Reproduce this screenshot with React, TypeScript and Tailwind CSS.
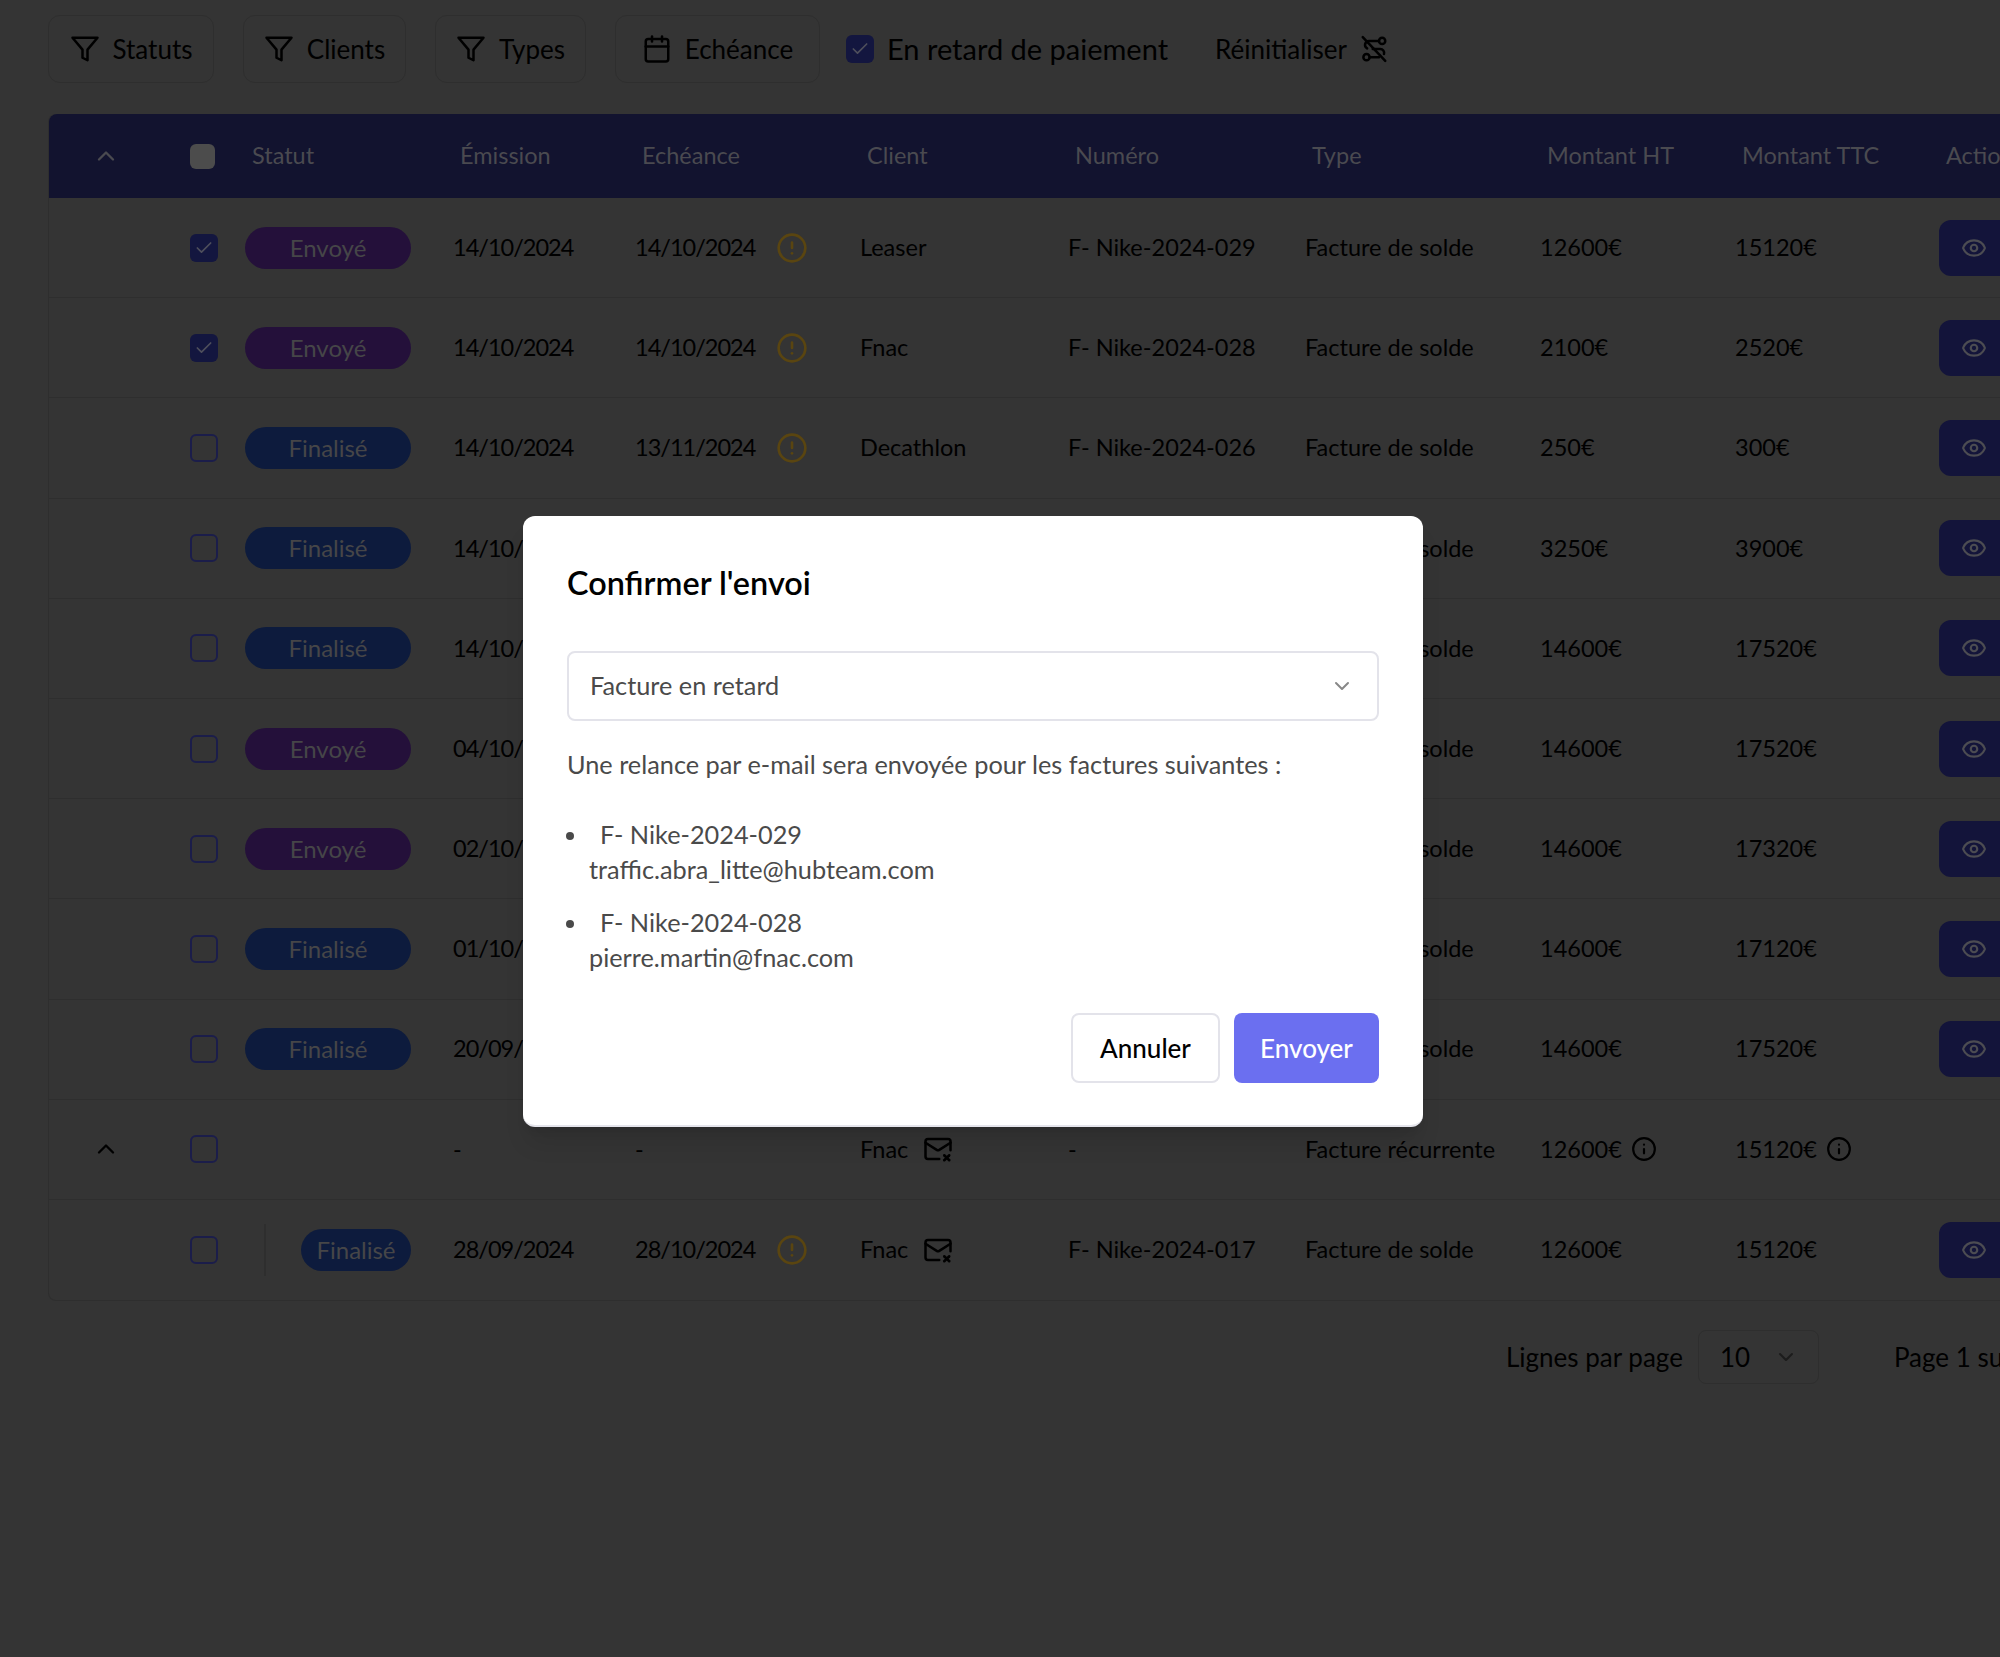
import { Calendar, Check, ChevronDown, ChevronUp, CircleAlert, Eye, Info, MailX } from 'lucide-react'

const COLS =
  'grid grid-cols-[141px_55px_208px_182px_225px_208px_237px_235px_195px_204px_120px] items-center'

type Row = {
  status: 'Envoyé' | 'Finalisé'
  checked?: boolean
  emission: string
  due: string
  client: string
  num: string
  ht: string
  ttc: string
}

const rows: Row[] = [
  { status: 'Envoyé', checked: true, emission: '14/10/2024', due: '14/10/2024', client: 'Leaser', num: 'F- Nike-2024-029', ht: '12600€', ttc: '15120€' },
  { status: 'Envoyé', checked: true, emission: '14/10/2024', due: '14/10/2024', client: 'Fnac', num: 'F- Nike-2024-028', ht: '2100€', ttc: '2520€' },
  { status: 'Finalisé', emission: '14/10/2024', due: '13/11/2024', client: 'Decathlon', num: 'F- Nike-2024-026', ht: '250€', ttc: '300€' },
  { status: 'Finalisé', emission: '14/10/2024', due: '13/11/2024', client: 'Decathlon', num: 'F- Nike-2024-025', ht: '3250€', ttc: '3900€' },
  { status: 'Finalisé', emission: '14/10/2024', due: '13/11/2024', client: 'Fnac', num: 'F- Nike-2024-024', ht: '14600€', ttc: '17520€' },
  { status: 'Envoyé', emission: '04/10/2024', due: '03/11/2024', client: 'Fnac', num: 'F- Nike-2024-023', ht: '14600€', ttc: '17520€' },
  { status: 'Envoyé', emission: '02/10/2024', due: '01/11/2024', client: 'Fnac', num: 'F- Nike-2024-022', ht: '14600€', ttc: '17320€' },
  { status: 'Finalisé', emission: '01/10/2024', due: '31/10/2024', client: 'Fnac', num: 'F- Nike-2024-021', ht: '14600€', ttc: '17120€' },
  { status: 'Finalisé', emission: '20/09/2024', due: '20/10/2024', client: 'Fnac', num: 'F- Nike-2024-020', ht: '14600€', ttc: '17520€' },
]

const FilterIcon = () => (
  <svg width="30" height="30" viewBox="0 0 24 24" fill="none" stroke="currentColor" strokeWidth="2" strokeLinecap="round" strokeLinejoin="round">
    <polygon points="22 3 2 3 10 12.46 10 19 14 21 14 12.46 22 3" />
  </svg>
)

const ResetIcon = () => (
  <svg width="30" height="30" viewBox="0 0 24 24" fill="none" stroke="currentColor" strokeWidth="2" strokeLinecap="round" strokeLinejoin="round">
    <path d="M3 2.5l18 19" />
    <circle cx="18.5" cy="5.5" r="2.5" />
    <circle cx="6" cy="18.5" r="2.5" />
    <path d="M8.5 18.5H16M16 5.5H8a3.2 3.2 0 0 0-1.5 6" />
    <path d="M11 12h6a3.2 3.2 0 0 1 3 4" />
  </svg>
)

const Box = ({ checked }: { checked?: boolean }) =>
  checked ? (
    <span className="flex h-7 w-7 items-center justify-center rounded-md bg-[#13163f] text-[#4e4f5c]">
      <Check size={20} strokeWidth={2} />
    </span>
  ) : (
    <span className="block h-7 w-7 rounded-md border-2 border-[#1b1d4a]" />
  )

const Pill = ({ status, small }: { status: string; small?: boolean }) => (
  <span
    className={`flex h-[42px] items-center justify-center rounded-full text-[24px] text-[#464648] ${
      status === 'Envoyé' ? 'bg-[#24103a]' : 'bg-[#0d1b3d]'
    } ${small ? 'ml-auto w-[110px]' : 'w-[166px]'}`}
  >
    {status}
  </span>
)

const ActionButton = () => (
  <span className="flex h-14 w-[80px] items-center rounded-l-xl bg-[#13143a] pl-[22px] text-[#4c4c52]">
    <Eye size={26} strokeWidth={2} />
  </span>
)

const Warn = () => <CircleAlert size={32} strokeWidth={2} className="ml-[21px] text-[#5a4510]" />

const Toolbutton = ({ label, width, icon }: { label: string; width: string; icon: React.ReactNode }) => (
  <button className={`flex h-[68px] items-center justify-center gap-[13px] rounded-xl border border-[#2e2e2e] text-[26px] ${width}`}>
    {icon}
    {label}
  </button>
)

export default function App() {
  return (
    <div className="relative h-[1657px] w-[2000px] overflow-hidden bg-[#343434] font-['Lato',sans-serif] text-[23.5px] text-black">
      {/* filtres */}
      <div className="flex items-center gap-[29px] pl-[48px] pt-[15px]">
        <Toolbutton label="Statuts" width="w-[166px]" icon={<FilterIcon />} />
        <Toolbutton label="Clients" width="w-[163px]" icon={<FilterIcon />} />
        <Toolbutton label="Types" width="w-[151px]" icon={<FilterIcon />} />
        <Toolbutton label="Echéance" width="w-[205px]" icon={<Calendar size={30} strokeWidth={2} />} />
        <div className="ml-[-3px] flex items-center gap-[13px] text-[29px]">
          <span className="flex h-7 w-7 items-center justify-center rounded-md bg-[#13163f] text-[#4e4f5c]">
            <Check size={20} strokeWidth={2} />
          </span>
          En retard de paiement
        </div>
        <div className="ml-[18px] flex items-center gap-[12px] text-[26px]">
          Réinitialiser
          <ResetIcon />
        </div>
      </div>

      {/* tableau */}
      <div className="ml-[48px] mt-[31px] w-[2100px] rounded-t-lg rounded-bl-lg border-b border-l border-[#2e2e2e]">
        <div className={`${COLS} h-[84px] rounded-t-lg bg-[#12132f] text-[23.5px] text-[#4a4a50]`}>
          <ChevronUp size={28} strokeWidth={2} className="ml-[43px]" />
          <span className="block h-[25px] w-[25px] rounded-md bg-[#4c4c4c]" />
          <span className="pl-[7px]">Statut</span>
          <span className="pl-[7px]">Émission</span>
          <span className="pl-[7px]">Echéance</span>
          <span className="pl-[7px]">Client</span>
          <span className="pl-[7px]">Numéro</span>
          <span className="pl-[7px]">Type</span>
          <span className="pl-[7px]">Montant HT</span>
          <span className="pl-[7px]">Montant TTC</span>
          <span className="pl-[7px]">Actions</span>
        </div>

        {rows.map((r) => (
          <div key={r.num} className={`${COLS} h-[100.2px] border-b border-[#2e2e2e]`}>
            <span />
            <Box checked={r.checked} />
            <Pill status={r.status} />
            <span className="tracking-[-1px]">{r.emission}</span>
            <span className="flex items-center">
              <span className="tracking-[-1px]">{r.due}</span>
              <Warn />
            </span>
            <span>{r.client}</span>
            <span>{r.num}</span>
            <span>Facture de solde</span>
            <span>{r.ht}</span>
            <span>{r.ttc}</span>
            <ActionButton />
          </div>
        ))}

        {/* facture récurrente */}
        <div className={`${COLS} h-[100.2px] border-b border-[#2e2e2e]`}>
          <ChevronUp size={28} strokeWidth={2} className="ml-[43px]" />
          <Box />
          <span />
          <span>-</span>
          <span>-</span>
          <span className="flex items-center gap-[15px]">
            Fnac
            <MailX size={30} strokeWidth={2} />
          </span>
          <span>-</span>
          <span>Facture récurrente</span>
          <span className="flex items-center gap-[9px]">
            12600€
            <Info size={26} strokeWidth={2} />
          </span>
          <span className="flex items-center gap-[9px]">
            15120€
            <Info size={26} strokeWidth={2} />
          </span>
          <span />
        </div>

        <div className={`${COLS} h-[100.2px]`}>
          <span />
          <Box />
          <span className="flex w-[166px] items-center">
            <span className="ml-[19px] h-[52px] w-[2px] bg-[#2e2e2e]" />
            <Pill status="Finalisé" small />
          </span>
          <span className="tracking-[-1px]">28/09/2024</span>
          <span className="flex items-center">
            <span className="tracking-[-1px]">28/10/2024</span>
            <Warn />
          </span>
          <span className="flex items-center gap-[15px]">
            Fnac
            <MailX size={30} strokeWidth={2} />
          </span>
          <span>F- Nike-2024-017</span>
          <span>Facture de solde</span>
          <span>12600€</span>
          <span>15120€</span>
          <ActionButton />
        </div>
      </div>

      {/* pagination */}
      <div className="mt-[29px] flex items-center whitespace-nowrap pl-[1506px] text-[26px]">
        <span>Lignes par page</span>
        <span className="ml-[15px] flex h-[54px] w-[121px] shrink-0 items-center rounded-lg border border-[#2e2e2e] pl-[21px]">
          10
          <ChevronDown size={24} strokeWidth={2} className="ml-[24px] text-[#1c1c1c]" />
        </span>
        <span className="ml-[75px]">Page 1 sur 3</span>
      </div>

      {/* modale */}
      <div className="absolute left-[523px] top-[516px] h-[611px] w-[900px] rounded-xl border-b-2 border-[#e5e5ec] bg-white p-[44px] text-[25.3px] text-[#4a4a4a] shadow-xl">
        <h2 className="text-[32.4px] font-semibold leading-[46px] text-black">Confirmer l'envoi</h2>
        <div className="mt-[45px] flex h-[70px] items-center justify-between rounded-lg border-2 border-[#e3e3ea] pl-[21px] pr-[23px]">
          Facture en retard
          <ChevronDown size={24} strokeWidth={2} className="text-[#888]" />
        </div>
        <p className="mt-[26px] leading-[35px]">Une relance par e-mail sera envoyée pour les factures suivantes :</p>
        <ul className="mt-[35px] list-disc pl-[22px] leading-[35px] marker:text-[#4a4a4a]">
          <li>
            <span className="ml-[11px]">F- Nike-2024-029</span>
            <br />
            traffic.abra_litte@hubteam.com
          </li>
          <li className="mt-[18px]">
            <span className="ml-[11px]">F- Nike-2024-028</span>
            <br />
            pierre.martin@fnac.com
          </li>
        </ul>
        <div className="mt-[38px] flex justify-end gap-[14px]">
          <button className="h-[70px] w-[149px] rounded-lg border-2 border-[#e3e3ea] bg-white text-[26px] font-medium text-black">Annuler</button>
          <button className="h-[70px] w-[145px] rounded-lg bg-[#6b6ff0] text-[26px] font-medium text-white">Envoyer</button>
        </div>
      </div>
    </div>
  )
}
